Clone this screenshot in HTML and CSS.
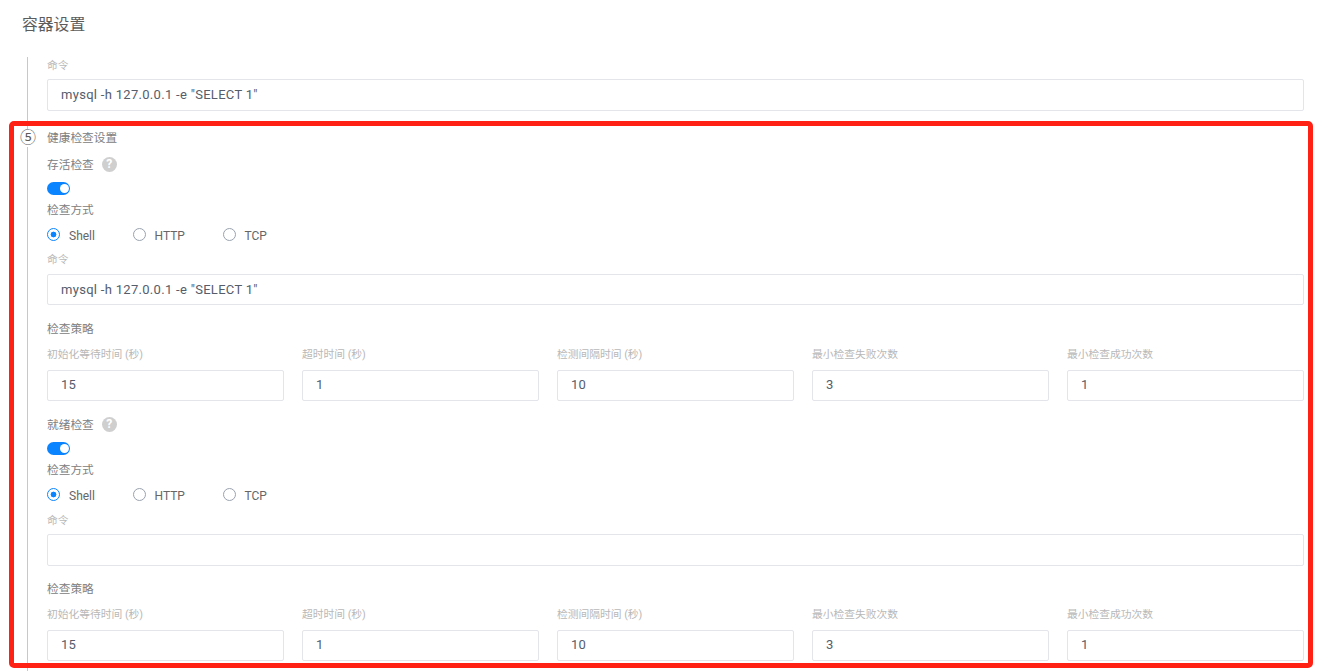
FILE: index.html
```html
<!DOCTYPE html>
<html lang="zh">
<head>
<meta charset="utf-8">
<title>容器设置</title>
<link rel="stylesheet" href="styles.css">
</head>
<body>
<div class="page">
  <h2 class="title">容器设置</h2>
  <div class="steps">
    <div class="field-label first">命令</div>
    <div class="input tall">mysql -h 127.0.0.1 -e "SELECT 1"</div>

    <div class="step-head">
      <span class="step-num">⑤</span>
      <span>健康检查设置</span>
    </div>

    <section class="probe">
      <div class="probe-name">存活检查 <span class="help">?</span></div>
      <div class="switch"><span class="knob"></span></div>
      <div class="sub-label">检查方式</div>
      <div class="radios">
        <label class="radio on"><i></i>Shell</label>
        <label class="radio"><i></i>HTTP</label>
        <label class="radio"><i></i>TCP</label>
      </div>
      <div class="field-label cmd">命令</div>
      <div class="input">mysql -h 127.0.0.1 -e "SELECT 1"</div>
      <div class="sub-label policy">检查策略</div>
      <div class="grid">
        <div><div class="field-label">初始化等待时间 (秒)</div><div class="input">15</div></div>
        <div><div class="field-label">超时时间 (秒)</div><div class="input">1</div></div>
        <div><div class="field-label">检测间隔时间 (秒)</div><div class="input">10</div></div>
        <div><div class="field-label">最小检查失败次数</div><div class="input">3</div></div>
        <div><div class="field-label">最小检查成功次数</div><div class="input">1</div></div>
      </div>
    </section>

    <section class="probe second">
      <div class="probe-name">就绪检查 <span class="help">?</span></div>
      <div class="switch"><span class="knob"></span></div>
      <div class="sub-label">检查方式</div>
      <div class="radios">
        <label class="radio on"><i></i>Shell</label>
        <label class="radio"><i></i>HTTP</label>
        <label class="radio"><i></i>TCP</label>
      </div>
      <div class="field-label cmd">命令</div>
      <div class="input tall"></div>
      <div class="sub-label policy">检查策略</div>
      <div class="grid">
        <div><div class="field-label">初始化等待时间 (秒)</div><div class="input">15</div></div>
        <div><div class="field-label">超时时间 (秒)</div><div class="input">1</div></div>
        <div><div class="field-label">检测间隔时间 (秒)</div><div class="input">10</div></div>
        <div><div class="field-label">最小检查失败次数</div><div class="input">3</div></div>
        <div><div class="field-label">最小检查成功次数</div><div class="input">1</div></div>
      </div>
    </section>
  </div>
</div>
<div class="highlight"></div>
</body>
</html>
```
FILE: styles.css
```css
* { box-sizing: border-box; }
html, body { margin: 0; height: 671px; overflow: hidden; background: #fff; }
body {
  position: relative;
  font-family: Roboto, "Noto Sans CJK SC", sans-serif;
  font-size: 11.7px;
  color: #5a6270;
}
.page { padding: 15px 19px 0 22px; }
.title {
  margin: 0;
  font-size: 15.8px;
  font-weight: 400;
  line-height: 20px;
  color: #5c5c5c;
}
.steps {
  margin: 22px 0 0 5px;
  padding-left: 19px;
  border-left: 1px solid #c8c8c8;
  height: 620px;
}
.field-label {
  height: 14px;
  line-height: 14px;
  font-size: 10.75px;
  color: #b8b8b8;
  margin-bottom: 8px;
}
.field-label.first { margin-top: 1px; padding-top: 2px; height: 16px; margin-bottom: 6px; }
.field-label.cmd { margin-top: 11px; margin-bottom: 7px; }
.second .field-label.cmd { margin-top: 12px; margin-bottom: 6px; }
.input {
  height: 31px;
  line-height: 29px;
  padding-left: 13px;
  border: 1px solid #e3e5ea;
  border-radius: 2px;
  font-size: 13px;
  letter-spacing: 0.3px;
  color: #555d6b;
}
.input.tall { height: 32px; }
.grid .input { line-height: 28px; }
.step-head {
  position: relative;
  margin-top: 19.5px;
  line-height: 14px;
  color: #808080;
}
.step-num {
  position: absolute;
  left: -27px;
  top: -2px;
  width: 15px;
  background: #fff;
  font-size: 16px;
  line-height: 18px;
  text-align: center;
  color: #5c5c5c;
}
.probe { margin-top: 11px; }
.probe.second { margin-top: 14.5px; }
.probe-name { height: 18px; line-height: 18px; color: #808080; display: flex; align-items: center; gap: 8px; }
.help {
  width: 15px;
  height: 15px;
  border-radius: 50%;
  background: #cfcfcf;
  color: #fff;
  font-size: 12px;
  font-weight: 700;
  line-height: 15px;
  text-align: center;
}
.switch {
  position: relative;
  width: 23px;
  height: 13px;
  margin-top: 8px;
  border-radius: 7px;
  background: #0a84ff;
}
.knob {
  position: absolute;
  right: 1px;
  top: 2px;
  width: 9px;
  height: 9px;
  border-radius: 50%;
  background: #fff;
}
.sub-label { margin-top: 8px; line-height: 14px; color: #808080; }
.sub-label.policy { margin-top: 17.5px; }
.second .sub-label.policy { margin-top: 16.5px; }
.radios { display: flex; margin-top: 12px; height: 14px; margin-bottom: -1px; }
.radio { display: flex; align-items: center; gap: 8.5px; color: #666; line-height: 14px; font-size: 12px; }
.radio.on { gap: 9px; }
.radio:nth-child(1) { width: 86px; }
.radio:nth-child(2) { width: 90px; }
.radio i {
  width: 13px;
  height: 13px;
  margin-top: -2px;
  border-radius: 50%;
  border: 1px solid #9aa2ae;
  background: #fff;
}
.radio.on i {
  border-color: #0a84ff;
  background: radial-gradient(circle, #0a84ff 0 2.6px, #fff 3.2px);
}
.grid {
  display: grid;
  grid-template-columns: repeat(5, 237px);
  column-gap: 18px;
  margin-top: 12px;
}
.highlight {
  position: absolute;
  left: 9px;
  top: 121px;
  width: 1304px;
  height: 547px;
  border: 5px solid #ff2114;
  border-radius: 5px;
}
```
